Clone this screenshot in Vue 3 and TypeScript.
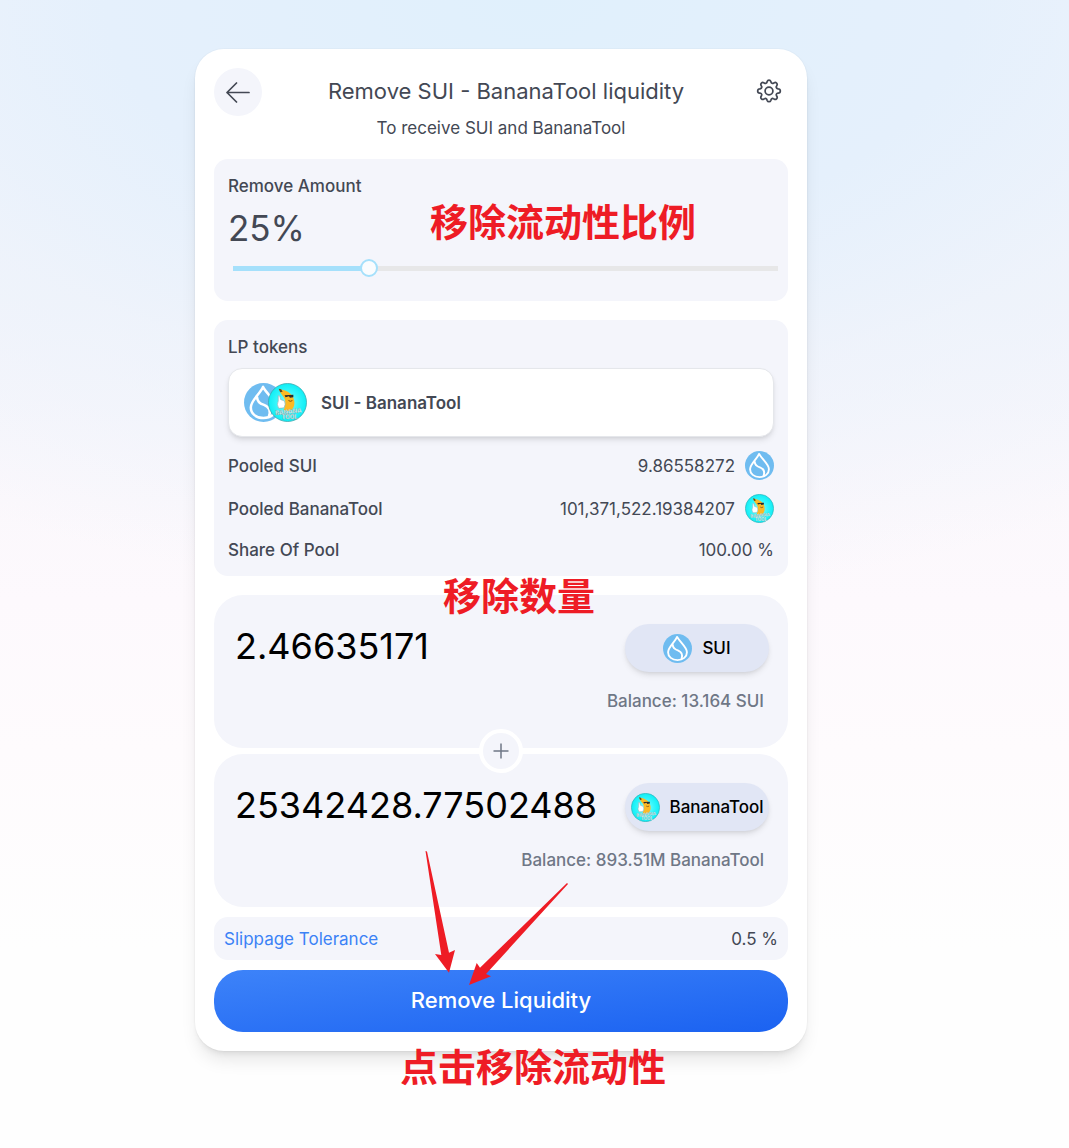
<script setup lang="ts">
import { computed, ref } from 'vue'

type TokenId = 'sui' | 'banana'

interface PooledRow {
  label: string
  value: string
  token?: TokenId
}

interface Receive {
  id: TokenId
  symbol: string
  amount: string
  balance: string
}

const percent = ref(25)
const sliderStyle = computed(() => ({ '--fill': `${percent.value}%` }))

const pooled: PooledRow[] = [
  { label: 'Pooled SUI', value: '9.86558272', token: 'sui' },
  { label: 'Pooled BananaTool', value: '101,371,522.19384207', token: 'banana' },
  { label: 'Share Of Pool', value: '100.00 %' },
]

const receives = ref<Receive[]>([
  { id: 'sui', symbol: 'SUI', amount: '2.46635171', balance: '13.164 SUI' },
  { id: 'banana', symbol: 'BananaTool', amount: '25342428.77502488', balance: '893.51M BananaTool' },
])
</script>

<template>
  <svg class="sprite" aria-hidden="true">
    <defs>
      <radialGradient id="cyan" cx="50%" cy="50%" r="50%">
        <stop offset="0" stop-color="#8ffcff" />
        <stop offset="0.6" stop-color="#35f6fb" />
        <stop offset="1" stop-color="#0feef5" />
      </radialGradient>
      <symbol id="token-sui" viewBox="0 0 40 40">
        <circle cx="20" cy="20" r="20" fill="#6fbcf0" />
        <path
          d="M19.500 4C16.500 11 7 18 7 25C7 31.500 12.500 36 20 36C27.500 36 33 31.500 33 25C33 18 23 11 19.500 4Z"
          fill="none" stroke="#fff" stroke-width="2.600" stroke-linejoin="round"
        />
        <path
          d="M13.500 15C13.500 19 16.500 21 20.500 22.500C25.500 24.500 28 28 25.500 34.500"
          fill="none" stroke="#fff" stroke-width="2.600" stroke-linecap="round"
        />
      </symbol>
      <symbol id="token-banana" viewBox="0 0 40 40">
        <circle cx="20" cy="20" r="19.500" fill="url(#cyan)" stroke="#3aa7ae" stroke-width="0.800" />
        <path
          d="M11.500 6.500L14.500 7C20 8 26.500 12 27 19C27.500 23.500 26 27 22 29L16 28C18.500 22 18.500 17 15 13C13.500 11 12.200 9.500 11.500 6.500Z"
          fill="#fdb924"
        />
        <path d="M11 6L13.500 6.500L15 9L12.500 9.500Z" fill="#5d4a20" />
        <path d="M17 12.500L26 12L26 14.500L22.500 15L21.500 13.500L18 14.500Z" fill="#2b2b2b" />
        <path d="M21 18Q23 19.500 25 18" fill="none" stroke="#7a4b12" stroke-width="1" />
        <path
          d="M10.500 13Q12.500 12 13 17L17 18.500Q18.500 22 16.500 25.500L11 26Q8.500 22 10.500 18.500Z"
          fill="#fff" stroke="#8aa7ab" stroke-width="0.600"
        />
        <text x="21" y="31.500" class="coin-text" transform="rotate(-6 21 31)">BANANA</text>
        <text x="22" y="37" class="coin-text">TOOL</text>
      </symbol>
    </defs>
  </svg>

  <main class="page">
    <section class="card">
      <header class="header">
        <button class="back" type="button" aria-label="Back">
          <svg width="24" height="24" viewBox="0 0 24 24" fill="none" stroke="currentColor" stroke-width="1.700" stroke-linecap="round" stroke-linejoin="round">
            <path d="M23 12.500H1M10.500 3L1 12.500L10.500 22" />
          </svg>
        </button>
        <h1 class="title">Remove SUI - BananaTool liquidity</h1>
        <button class="settings" type="button" aria-label="Settings">
          <svg width="26" height="26" viewBox="0 0 24 24" fill="none" stroke="currentColor" stroke-width="1.600" stroke-linejoin="round">
            <circle cx="12" cy="12" r="3.600" />
            <path d="M10.300 3.200a1.800 1.800 0 0 1 3.400 0l.2.700a1.500 1.500 0 0 0 2.200.9l.6-.3a1.800 1.800 0 0 1 2.500 2.500l-.3.600a1.500 1.500 0 0 0 .9 2.200l.7.200a1.800 1.800 0 0 1 0 3.900l-.7.200a1.500 1.500 0 0 0-.9 2.200l.3.600a1.800 1.800 0 0 1-2.500 2.500l-.6-.3a1.500 1.500 0 0 0-2.200.9l-.2.700a1.800 1.800 0 0 1-3.400 0l-.2-.7a1.500 1.500 0 0 0-2.200-.9l-.6.300a1.800 1.800 0 0 1-2.500-2.500l.3-.6a1.500 1.500 0 0 0-.9-2.200l-.7-.2a1.800 1.800 0 0 1 0-3.900l.7-.2a1.500 1.500 0 0 0 .9-2.200l-.3-.6a1.800 1.800 0 0 1 2.500-2.500l.6.300a1.500 1.500 0 0 0 2.200-.9z" />
          </svg>
        </button>
      </header>
      <p class="subtitle">To receive SUI and BananaTool</p>

      <div class="panel">
        <label class="label" for="percent">Remove Amount</label>
        <output class="percent" for="percent">{{ percent }}%</output>
        <input id="percent" v-model.number="percent" class="slider" type="range" min="0" max="100" :style="sliderStyle">
      </div>

      <div class="panel">
        <h2 class="label">LP tokens</h2>
        <div class="pair">
          <svg class="coin coin-pair"><use href="#token-sui" /></svg>
          <svg class="coin coin-pair coin-over"><use href="#token-banana" /></svg>
          <span class="pair-name">SUI - BananaTool</span>
        </div>
        <dl class="rows">
          <div v-for="row in pooled" :key="row.label" class="row">
            <dt>{{ row.label }}</dt>
            <dd>
              {{ row.value }}
              <svg v-if="row.token" class="coin"><use :href="`#token-${row.token}`" /></svg>
            </dd>
          </div>
        </dl>
      </div>

      <div class="receives">
        <div v-for="item in receives" :key="item.id" class="receive">
          <div class="receive-row">
            <input v-model="item.amount" class="amount" type="text" inputmode="decimal" :aria-label="`${item.symbol} amount`">
            <button class="chip" type="button">
              <svg class="coin"><use :href="`#token-${item.id}`" /></svg>
              {{ item.symbol }}
            </button>
          </div>
          <p class="balance">Balance: {{ item.balance }}</p>
        </div>
        <span class="plus">
          <svg width="16" height="16" viewBox="0 0 16 16" fill="none" stroke="currentColor" stroke-width="1.500">
            <path d="M8 0.500V15.500M0.500 8H15.500" />
          </svg>
        </span>
      </div>

      <div class="slippage">
        <a href="#slippage">Slippage Tolerance</a>
        <span>0.5 %</span>
      </div>

      <button class="submit" type="button">Remove Liquidity</button>

      <span class="note note-ratio">移除流动性比例</span>
      <span class="note note-amount">移除数量</span>
      <span class="note note-submit">点击移除流动性</span>
      <svg class="arrows" width="160" height="144" viewBox="0 0 160 144" fill="#ee1c25">
        <path d="M5.500 3L7 3.500L29 104.700L35 102L29 124.700L15 106L21.300 107Z" />
        <path d="M147 35L148 36L66 126L71 128.300L49 137L56.700 115L60 119.700Z" />
      </svg>
    </section>
  </main>
</template>

<style>
body {
  margin: 0;
  background: #fefefe;
}
</style>

<style scoped>
* {
  box-sizing: border-box;
}

h1,
h2,
p,
dl,
dd {
  margin: 0;
}

button,
input {
  font: inherit;
  border: 0;
  padding: 0;
}

button {
  cursor: pointer;
}

.sprite {
  position: absolute;
  width: 0;
  height: 0;
}

.coin-text {
  font: 800 6px Inter, "Liberation Sans", sans-serif;
  fill: #e6fbfa;
  stroke: #6c9a9d;
  stroke-width: 0.3px;
  text-anchor: middle;
}

.page {
  min-height: 100vh;
  padding: 49px 67px 97px 0;
  color: #434854;
  font: 400 17px/24px Inter, "Liberation Sans", sans-serif;
  background:
    radial-gradient(ellipse 100% 600px at 50% 0, #e0f0fc 0%, #e5f0fc 40%, rgba(236, 242, 251, 0.7) 65%, rgba(245, 245, 250, 0) 100%),
    linear-gradient(to bottom, #eff4fc 0, #f3f5fb 300px, #fbf8fc 500px, #fdf9fd 600px, #fefbfd 750px, #fefefe 950px);
}

.card {
  position: relative;
  width: 100%;
  max-width: 612px;
  margin: 0 auto;
  padding: 19px;
  border-radius: 29px;
  background: #fff;
  box-shadow: 0 0 0 1px rgba(0, 0, 0, 0.02), 0 12px 18px -4px rgba(0, 0, 0, 0.1), 0 5px 7px -4px rgba(0, 0, 0, 0.1);
}

.header {
  display: flex;
  align-items: center;
  justify-content: space-between;
}

.back {
  display: grid;
  place-items: center;
  width: 48px;
  height: 48px;
  border-radius: 50%;
  color: #434854;
  background: #f4f5fb;
}

.title {
  padding-bottom: 2px;
  font-size: 22px;
  font-weight: 400;
  line-height: 44px;
}

.settings {
  width: 38px;
  height: 30px;
  color: #434854;
  background: none;
}

.settings svg {
  display: block;
  margin: 0 auto 2px;
}

.subtitle {
  text-align: center;
}

.panel {
  margin-top: 19px;
  padding: 15px 14px 14px;
  border-radius: 14px;
  background: #f4f5fb;
}

.label {
  display: block;
  font-size: 17px;
  font-weight: 500;
}

.percent {
  display: block;
  margin-top: 8px;
  font-size: 35px;
  font-weight: 400;
  line-height: 44px;
}

.slider {
  display: block;
  width: calc(100% + 17px);
  height: 18px;
  margin: 9px -13px 10px -4px;
  appearance: none;
  background: none;
}

.slider::-webkit-slider-runnable-track {
  height: 18px;
  background:
    linear-gradient(to right, #a5e0fb var(--fill), #e7e7e8 var(--fill)) center / calc(100% - 18px) 5px no-repeat;
}

.slider::-webkit-slider-thumb {
  appearance: none;
  width: 18px;
  height: 18px;
  border: 2px solid #a5e0fb;
  border-radius: 50%;
  background: #fafcfe;
}

.pair {
  display: flex;
  align-items: center;
  height: 69px;
  margin-top: 9px;
  padding: 0 15px;
  border: 1px solid #e5e7eb;
  border-radius: 14px;
  background: #fff;
  box-shadow: 0 4px 6px -1px rgba(0, 0, 0, 0.1), 0 2px 4px -2px rgba(0, 0, 0, 0.1);
}

.coin {
  flex: none;
  width: 29px;
  height: 29px;
}

.coin-pair {
  width: 39px;
  height: 39px;
}

.coin-over {
  margin-left: -15px;
}

.pair-name {
  margin-left: 14px;
  font-weight: 600;
}

.rows {
  display: grid;
  gap: 14px;
  margin-top: 14px;
}

.row,
.row dd {
  display: flex;
  align-items: center;
  justify-content: space-between;
}

.row {
  min-height: 25px;
}

.row dt {
  font-weight: 500;
}

.row dd {
  gap: 10px;
}

.receives {
  position: relative;
  display: grid;
  grid-template-columns: minmax(0, 1fr);
  gap: 6px;
  margin-top: 19px;
}

.receive {
  padding: 29px 19px 35px 21px;
  border-radius: 29px;
  background: #f4f5fb;
}

.receive-row {
  display: flex;
  gap: 10px;
}

.amount {
  flex: 1;
  min-width: 0;
  height: 44px;
  color: #000;
  font-size: 36px;
  font-weight: 400;
  background: none;
  outline: none;
}

.chip {
  display: flex;
  align-items: center;
  justify-content: center;
  gap: 10px;
  min-width: 144px;
  height: 48px;
  padding: 0 5px;
  border-radius: 24px;
  color: #000;
  font-weight: 500;
  background: #e1e6f5;
  box-shadow: 0 4px 6px -1px rgba(0, 0, 0, 0.1), 0 2px 4px -2px rgba(0, 0, 0, 0.1);
}

.balance {
  margin-top: 17px;
  padding-right: 5px;
  color: #6f7786;
  font-weight: 500;
  text-align: right;
}

.plus {
  position: absolute;
  top: 50%;
  left: 50%;
  display: grid;
  place-items: center;
  width: 44px;
  height: 44px;
  border: 4px solid #fff;
  border-radius: 50%;
  color: #6f7786;
  background: #f4f5fb;
  transform: translate(-50%, -50%);
}

.slippage {
  display: flex;
  align-items: center;
  justify-content: space-between;
  height: 43px;
  margin: 10px 0;
  padding: 0 10px;
  border-radius: 14px;
  background: #f4f5fb;
}

.slippage a {
  color: #3b82f6;
  text-decoration: none;
}

.submit {
  display: block;
  width: 100%;
  height: 62px;
  padding-bottom: 2px;
  border-radius: 29px;
  color: #fff;
  font-size: 22px;
  font-weight: 500;
  background: linear-gradient(to bottom right, #3d83f9, #1b62f1);
}

.note {
  position: absolute;
  color: #ee1c25;
  font: 700 38px/48px "Noto Sans CJK SC", sans-serif;
  white-space: nowrap;
}

.note-ratio {
  top: 147px;
  left: 235px;
}

.note-amount {
  top: 521px;
  left: 248px;
}

.note-submit {
  top: 992px;
  left: 205px;
}

.arrows {
  position: absolute;
  top: 799px;
  left: 225px;
  pointer-events: none;
}
</style>
